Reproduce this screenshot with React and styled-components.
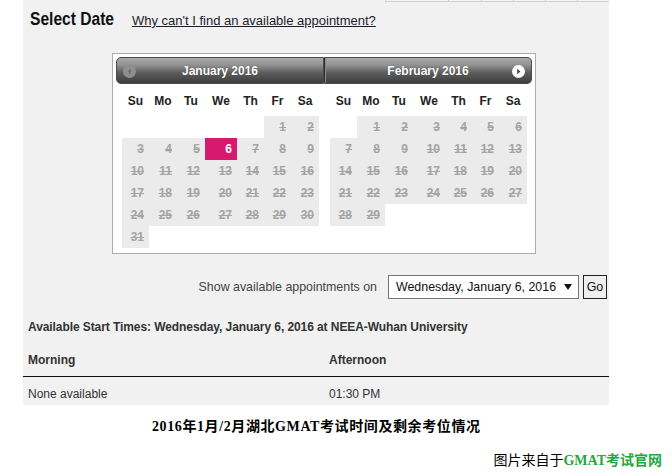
import React from "react";
import styled, { createGlobalStyle } from "styled-components";

const GlobalStyle = createGlobalStyle`
  html, body { margin: 0; padding: 0; background: #fff; }
  body { font-family: "Liberation Sans", Arial, sans-serif; color: #333; }
`;

const Page = styled.div`
  width: 672px;
  height: 475px;
  overflow: hidden;
`;

const Panel = styled.div`
  margin-left: 23px;
  width: 586px;
  background: #f1f1f1;
  display: flex;
  flex-direction: column;
  padding-bottom: 1px;
`;

const TopStrip = styled.div`
  display: flex;
  justify-content: flex-end;
  height: 3px;
`;

const StripCell = styled.div`
  width: ${(p) => p.$w}px;
  height: 2px;
  box-sizing: border-box;
  border-left: 1px solid #cfcfcf;
  border-bottom: 1px solid #cfcfcf;
  background: #f4f4f4;
`;

const TitleRow = styled.div`
  display: flex;
  align-items: baseline;
  margin-top: 5px;
  padding-left: 7px;
  height: 22px;
`;

const Title = styled.h2`
  margin: 0;
  width: 83px;
  white-space: nowrap;
  font-size: 19px;
  line-height: 22px;
  font-weight: bold;
  color: #111;
  transform: scaleX(0.82);
  transform-origin: left center;
`;

const HelpLink = styled.a`
  margin-left: 19px;
  font-size: 13px;
  line-height: 22px;
  color: #1c1c2a;
  text-decoration: underline;
  cursor: pointer;
`;

const CalendarBox = styled.div`
  margin: 23px 0 0 89px;
  width: 416px;
  padding: 3px;
  border: 1px solid #acacac;
  background: #fff;
  display: flex;
`;

const Group = styled.div`
  width: 208px;
  display: flex;
  flex-direction: column;
`;

const Header = styled.div`
  position: relative;
  height: 27px;
  box-sizing: border-box;
  border: 1px solid #4a4a4a;
  border-left: ${(p) => (p.$side === "right" ? "1px solid #2e2e2e" : "1px solid #4a4a4a")};
  border-radius: ${(p) => (p.$side === "left" ? "5px 0 0 5px" : "0 5px 5px 0")};
  background: linear-gradient(#a9a9a9 0%, #929292 28%, #5e5e5e 58%, #3d3d3d 100%);
  box-shadow: ${(p) => (p.$side === "right" ? "inset 1px 0 0 #8a8a8a" : "none")};
  display: flex;
  align-items: center;
  justify-content: center;
`;

const MonthTitle = styled.span`
  font-size: 12px;
  font-weight: bold;
  color: #fff;
  text-shadow: 0 0 1px rgba(0, 0, 0, 0.4);
`;

const NavIcon = styled.span`
  position: absolute;
  top: 6px;
  ${(p) => (p.$dir === "prev" ? "left: 6px;" : "right: 6px;")}
  width: 13px;
  height: 13px;
  display: block;
`;

const Grid = styled.div`
  margin: 0 0 2px 6px;
  width: 197px;
  display: grid;
  grid-template-columns: 27px 28px 28px 32px 27px 27px 28px;
  grid-template-rows: 32px;
  grid-auto-rows: 22px;
`;

const DayName = styled.div`
  padding-top: 2px;
  box-sizing: border-box;
  display: flex;
  align-items: center;
  justify-content: center;
  font-size: 12px;
  font-weight: bold;
  color: #222;
`;

const DayCell = styled.div`
  display: flex;
  align-items: center;
  justify-content: flex-end;
  padding-right: 5px;
  font-size: 12px;
  font-weight: bold;
  background: ${(p) => (p.$empty ? "transparent" : p.$selected ? "#d71a70" : "#ebebeb")};
  color: ${(p) => (p.$selected ? "#fff" : "#a4a4a4")};
  text-decoration: ${(p) => (p.$selected || p.$empty ? "none" : "line-through")};
`;

const ShowRow = styled.div`
  margin-top: 21px;
  display: flex;
  justify-content: flex-end;
  align-items: center;
  padding-right: 2px;
  height: 24px;
`;

const ShowLabel = styled.span`
  font-size: 12.4px;
  color: #444;
  margin-right: 11px;
`;

const SelectBox = styled.div`
  width: 191px;
  height: 24px;
  box-sizing: border-box;
  border: 1px solid #767676;
  background: #fff;
  display: flex;
  align-items: center;
  justify-content: space-between;
  padding: 0 6px 0 7px;
  font-size: 12.4px;
  color: #111;
`;

const GoButton = styled.button`
  margin-left: 4px;
  width: 24px;
  height: 24px;
  padding: 0;
  box-sizing: border-box;
  border: 1px solid #222;
  background: #efefef;
  font-family: "Liberation Sans", Arial, sans-serif;
  font-size: 12.4px;
  color: #111;
`;

const StartTimes = styled.h3`
  margin: 20px 0 0;
  padding-left: 5px;
  font-size: 12px;
  line-height: 16px;
  font-weight: bold;
  letter-spacing: -0.08px;
  color: #333;
`;

const TimesTable = styled.div`
  margin-top: 9px;
  display: grid;
  grid-template-columns: 301px 1fr;
`;

const HeadCell = styled.div`
  padding: 8px 5px 8px;
  font-size: 12px;
  line-height: 16px;
  font-weight: bold;
  color: #333;
  border-bottom: 1px solid #111;
`;

const BodyCell = styled.div`
  padding: 9px 5px 2px;
  font-size: 12px;
  line-height: 16px;
  color: #333;
`;

const Caption = styled.div`
  margin: 12px 0 0 152px;
  font-family: "Liberation Serif", "Noto Sans CJK SC", serif;
  font-size: 14px;
  line-height: 20px;
  font-weight: bold;
  letter-spacing: 0.6px;
  color: #000;
`;

const Credit = styled.div`
  margin-top: 14px;
  padding-right: 10px;
  text-align: right;
  font-family: "Liberation Serif", "Noto Sans CJK SC", serif;
  font-size: 14px;
  line-height: 20px;
  color: #000;
`;

const CreditSite = styled.span`
  font-weight: bold;
  color: #1fa83c;
`;

const PrevIcon = () => (
  <svg width="13" height="13" viewBox="0 0 13 13">
    <circle cx="6.5" cy="6.5" r="6.5" fill="#8e8e8e" />
    <path d="M7.8 3.8 L4.6 6.5 L7.8 9.2 Z" fill="#6c6c6c" />
  </svg>
);

const NextIcon = () => (
  <svg width="13" height="13" viewBox="0 0 13 13">
    <circle cx="6.5" cy="6.5" r="6.5" fill="#fff" />
    <path d="M5.2 3.8 L8.4 6.5 L5.2 9.2 Z" fill="#444" />
  </svg>
);

const DAY_NAMES = ["Su", "Mo", "Tu", "We", "Th", "Fr", "Sa"];

const months = [
  { name: "January 2016", start: 5, days: 31, side: "left", selected: 6 },
  { name: "February 2016", start: 1, days: 29, side: "right", selected: null },
];

function Month({ m }) {
  const cells = [];
  for (let i = 0; i < m.start; i++) cells.push(null);
  for (let d = 1; d <= m.days; d++) cells.push(d);
  return (
    <Group>
      <Header $side={m.side}>
        {m.side === "left" ? (
          <NavIcon $dir="prev"><PrevIcon /></NavIcon>
        ) : (
          <NavIcon $dir="next"><NextIcon /></NavIcon>
        )}
        <MonthTitle>{m.name}</MonthTitle>
      </Header>
      <Grid>
        {DAY_NAMES.map((n) => (
          <DayName key={n}>{n}</DayName>
        ))}
        {cells.map((d, i) =>
          d === null ? (
            <DayCell key={"e" + i} $empty />
          ) : (
            <DayCell key={d} $selected={d === m.selected}>{d}</DayCell>
          )
        )}
      </Grid>
    </Group>
  );
}

export default function App() {
  return (
    <Page>
      <GlobalStyle />
      <Panel>
        <TopStrip>
          {[63, 33, 32, 32, 32, 32].map((w, i) => (
            <StripCell key={i} $w={w} />
          ))}
        </TopStrip>
        <TitleRow>
          <Title>Select Date</Title>
          <HelpLink>Why can't I find an available appointment?</HelpLink>
        </TitleRow>
        <CalendarBox>
          {months.map((m) => (
            <Month key={m.name} m={m} />
          ))}
        </CalendarBox>
        <ShowRow>
          <ShowLabel>Show available appointments on</ShowLabel>
          <SelectBox>
            <span>Wednesday, January 6, 2016</span>
            <svg width="8" height="6" viewBox="0 0 8 6">
              <path d="M0 0 L8 0 L4 6 Z" fill="#111" />
            </svg>
          </SelectBox>
          <GoButton>Go</GoButton>
        </ShowRow>
        <StartTimes>Available Start Times: Wednesday, January 6, 2016 at NEEA-Wuhan University</StartTimes>
        <TimesTable>
          <HeadCell>Morning</HeadCell>
          <HeadCell>Afternoon</HeadCell>
          <BodyCell>None available</BodyCell>
          <BodyCell>01:30 PM</BodyCell>
        </TimesTable>
      </Panel>
      <Caption>2016年1月/2月湖北GMAT考试时间及剩余考位情况</Caption>
      <Credit>
        图片来自于<CreditSite>GMAT考试官网</CreditSite>
      </Credit>
    </Page>
  );
}
